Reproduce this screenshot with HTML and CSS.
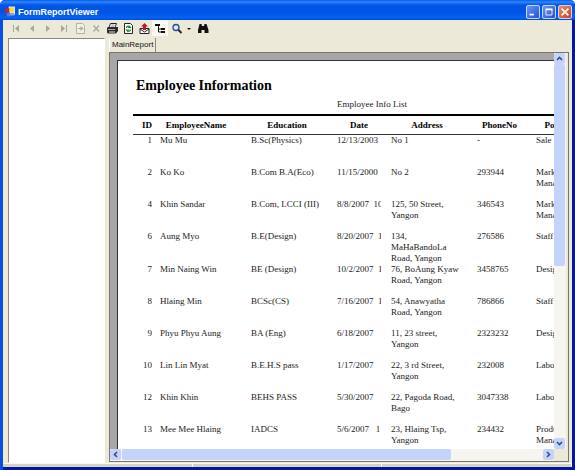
FILE: index.html
```html
<!DOCTYPE html>
<html lang="en">
<head>
<meta charset="utf-8">
<title>FormReportViewer</title>
<link rel="stylesheet" href="styles.css">
</head>
<body>
<div class="window">
  <header class="titlebar">
    <svg class="app-icon" viewBox="0 0 11 11" aria-hidden="true">
      <rect x="4" y="0" width="7" height="9" fill="#dfe6f5"/>
      <rect x="0" y="2" width="5" height="5" fill="#c8202c"/>
      <rect x="5" y="1" width="5" height="5" fill="#f2dc3c"/>
      <rect x="2" y="7" width="4" height="4" fill="#4a7be0"/>
      <rect x="6" y="7" width="4" height="3" fill="#8f9cc4"/>
    </svg>
    <h1 class="caption">FormReportViewer</h1>
    <button class="win-btn" type="button" aria-label="Minimize"><svg viewBox="0 0 14 14"><rect x="3" y="9" width="5" height="2" fill="#fff"/></svg></button>
    <button class="win-btn" type="button" aria-label="Maximize"><svg viewBox="0 0 14 14"><path d="M3.500 4h7v6.500h-7z" fill="none" stroke="#fff"/><path d="M3 3h8v2H3z" fill="#fff"/></svg></button>
    <button class="win-btn close" type="button" aria-label="Close"><svg viewBox="0 0 14 14"><path d="M3 3l8 8M11 3l-8 8" stroke="#fff" stroke-width="2"/></svg></button>
  </header>

  <nav class="toolbar" aria-label="Report tools">
    <button class="tool" type="button" aria-label="First page" disabled><svg viewBox="0 0 16 16"><path d="M5 5h1v7H5zM11 5v7L7 8.500z" fill="#aaa89c"/></svg></button>
    <button class="tool" type="button" aria-label="Previous page" disabled><svg viewBox="0 0 16 16"><path d="M10 5v7L6 8.500z" fill="#aaa89c"/></svg></button>
    <button class="tool" type="button" aria-label="Next page" disabled><svg viewBox="0 0 16 16"><path d="M6 5v7l4-3.500z" fill="#aaa89c"/></svg></button>
    <button class="tool" type="button" aria-label="Last page" disabled><svg viewBox="0 0 16 16"><path d="M5 5v7l4-3.500zM10 5h1v7h-1z" fill="#aaa89c"/></svg></button>
    <button class="tool" type="button" aria-label="Go to page" disabled><svg viewBox="0 0 16 16"><path d="M4.500 3.500h6l2 2v8h-8z" fill="#f3f1e6" stroke="#b5b3a5"/><path d="M6 8h2.500V6l3 2.500-3 2.500V9H6z" fill="#aaa89c"/></svg></button>
    <button class="tool" type="button" aria-label="Close view" disabled><svg viewBox="0 0 16 16"><path d="M5.500 5.500l5.500 6M11 5.500l-5.500 6" stroke="#aaa89c" stroke-width="1.300"/></svg></button>
    <button class="tool" type="button" aria-label="Print"><svg viewBox="0 0 16 16"><path d="M6.500 3.500h6l-1.500 4H5z" fill="#fff" stroke="#222"/><path d="M7.500 5h3M7 6.200h3" stroke="#666" stroke-width=".6"/><path d="M3 8l1-1h10v4l-2 2.500H4L3 12.500z" fill="#2b2b2b"/><path d="M4 9h7v1H4z" fill="#a8a8a0"/><path d="M5 11.500h6v1H5z" fill="#ddd"/></svg></button>
    <button class="tool" type="button" aria-label="Refresh"><svg viewBox="0 0 16 16"><path d="M4.500 3.500h6l2 2v8h-8z" fill="#fff" stroke="#222"/><path d="M6.500 8c0-2 2-2 3.500-1M10.500 9.500c0 2-2 2-3.500 1" fill="none" stroke="#168a28" stroke-width="1.300"/><path d="M9 5l2.500 3H8zM8 12.500L5.500 9.500H9z" fill="#168a28"/></svg></button>
    <button class="tool" type="button" aria-label="Export report"><svg viewBox="0 0 16 16"><path d="M4 8.500h9v5H4z" fill="#fff" stroke="#222"/><path d="M4 9l4.500 3L13 9" fill="none" stroke="#222"/><path d="M8.500 3L12 6.500h-2V10H7V6.500H5z" fill="#c4182c"/></svg></button>
    <button class="tool pressed" type="button" aria-label="Toggle group tree"><svg viewBox="0 0 16 16"><path d="M3 4h5v2H3zM9 8h4v2H9zM9 11h4v2H9z" fill="#111"/><path d="M6.500 6v6H9M6.500 9H9" fill="none" stroke="#111"/></svg></button>
    <button class="tool" type="button" aria-label="Zoom"><svg viewBox="0 0 16 16"><path d="M10 9.500l3.500 3.500" stroke="#222" stroke-width="2"/><circle cx="8" cy="7.500" r="3" fill="#dbe9ff" stroke="#24479c" stroke-width="1.300"/></svg></button>
    <button class="tool narrow" type="button" aria-label="Zoom levels"><svg viewBox="0 0 10 16"><path d="M3 8h4L5 10z" fill="#111"/></svg></button>
    <button class="tool" type="button" aria-label="Search text"><svg viewBox="0 0 16 16"><path d="M5.500 4h2l.5 2h2l.5-2h2l2 6v3h-4v-3h-3v3H4v-3z" fill="#111"/></svg></button>
  </nav>

  <div class="workspace">
    <aside class="tree" aria-label="Group tree"></aside>
    <main class="report">
      <div class="tabs"><button class="tab" type="button">MainReport</button></div>
      <div class="viewer">
        <div class="canvas">
          <article class="page">
            <h2 class="title">Employee Information</h2>
            <p class="subtitle">Employee Info List</p>
            <table class="list">
              <colgroup><col class="c-id"><col class="c-name"><col class="c-edu"><col class="c-date"><col class="c-addr"><col class="c-phone"><col class="c-pos"></colgroup>
              <thead><tr><th class="id">ID</th><th class="name">EmployeeName</th><th>Education</th><th class="date">Date</th><th>Address</th><th>PhoneNo</th><th class="pos">Position</th></tr></thead>
              <tbody>
                <tr><td class="id">1</td><td>Mu Mu</td><td>B.Sc(Physics)</td><td class="date"><div>12/13/2003</div></td><td class="addr">No 1</td><td>-</td><td>Sale</td></tr>
                <tr><td class="id">2</td><td>Ko Ko</td><td>B.Com B.A(Eco)</td><td class="date"><div>11/15/2000</div></td><td class="addr">No 2</td><td>293944</td><td>Marketing Manager</td></tr>
                <tr><td class="id">4</td><td>Khin Sandar</td><td>B.Com, LCCI (III)</td><td class="date"><div>8/8/2007  10</div></td><td class="addr">125, 50 Street, Yangon</td><td>346543</td><td>Marketing Manager</td></tr>
                <tr><td class="id">6</td><td>Aung Myo</td><td>B.E(Design)</td><td class="date"><div>8/20/2007  1</div></td><td class="addr">134, MaHaBandoLa Road, Yangon</td><td>276586</td><td>Staff</td></tr>
                <tr><td class="id">7</td><td>Min Naing Win</td><td>BE (Design)</td><td class="date"><div>10/2/2007  1</div></td><td class="addr">76, BoAung Kyaw Road, Yangon</td><td>3458765</td><td>Designer</td></tr>
                <tr><td class="id">8</td><td>Hlaing Min</td><td>BCSc(CS)</td><td class="date"><div>7/16/2007  1</div></td><td class="addr">54, Anawyatha Road, Yangon</td><td>786866</td><td>Staff</td></tr>
                <tr><td class="id">9</td><td>Phyu Phyu Aung</td><td>BA (Eng)</td><td class="date"><div>6/18/2007</div></td><td class="addr">11, 23 street, Yangon</td><td>2323232</td><td>Designer</td></tr>
                <tr><td class="id">10</td><td>Lin Lin Myat</td><td>B.E.H.S pass</td><td class="date"><div>1/17/2007</div></td><td class="addr">22, 3 rd Street, Yangon</td><td>232008</td><td>Labour</td></tr>
                <tr><td class="id">12</td><td>Khin Khin</td><td>BEHS PASS</td><td class="date"><div>5/30/2007</div></td><td class="addr">22, Pagoda Road, Bago</td><td>3047338</td><td>Labour</td></tr>
                <tr><td class="id">13</td><td>Mee Mee Hlaing</td><td>IADCS</td><td class="date"><div>5/6/2007   1</div></td><td class="addr">23, Hlaing Tsp, Yangon</td><td>234432</td><td>Product Manager</td></tr>
              </tbody>
            </table>
          </article>
        </div>
        <div class="scroll vertical">
          <button class="arrow" type="button" aria-label="Scroll up"><svg viewBox="0 0 11 11"><path d="M3 7l2.500-2.500L8 7" fill="none" stroke="#32507e" stroke-width="1.600"/></svg></button>
          <div class="track"><div class="thumb"></div></div>
          <button class="arrow" type="button" aria-label="Scroll down"><svg viewBox="0 0 11 11"><path d="M3 4l2.500 2.500L8 4" fill="none" stroke="#32507e" stroke-width="1.600"/></svg></button>
        </div>
        <div class="scroll horizontal">
          <button class="arrow" type="button" aria-label="Scroll left"><svg viewBox="0 0 11 11"><path d="M7 3L4.500 5.500 7 8" fill="none" stroke="#32507e" stroke-width="1.600"/></svg></button>
          <div class="track"><div class="thumb"></div></div>
          <button class="arrow" type="button" aria-label="Scroll right"><svg viewBox="0 0 11 11"><path d="M4 3l2.500 2.500L4 8" fill="none" stroke="#32507e" stroke-width="1.600"/></svg></button>
        </div>
        <div class="corner"></div>
      </div>
    </main>
  </div>
  <footer class="status"><span></span><span></span><span></span></footer>
</div>
</body>
</html>
```
FILE: styles.css
```css
* { box-sizing: border-box; }

body {
  margin: 0;
  background: #fff;
  font-family: "Liberation Sans", sans-serif;
}

button {
  display: block;
  margin: 0;
  padding: 0;
  border: 0;
  background: none;
  font: inherit;
  color: inherit;
}

svg { display: block; width: 100%; height: 100%; }

.window {
  display: flex;
  flex-direction: column;
  height: 100vh;
  padding: 0 3px 3px;
  background: linear-gradient(90deg, #0a4fe0 3px, #0018a0 3px);
  border-radius: 5px 5px 0 0;
  overflow: hidden;
}

/* Title bar */
.titlebar {
  display: flex;
  align-items: center;
  gap: 2px;
  flex: none;
  height: 20px;
  margin: 0 -3px;
  padding: 3px 3px 0 5px;
  background: linear-gradient(#0a5be8 0, #2b86ff 10%, #0256e6 25%, #0054e3 60%, #0263fa 90%, #0148c8 100%);
}

.app-icon { width: 10px; height: 11px; }

.caption {
  flex: 1;
  margin: 0 0 0 1px;
  font-size: 9px;
  line-height: 14px;
  color: #fff;
}

.win-btn {
  width: 14px;
  height: 14px;
  border: 1px solid #c8d6f8;
  border-radius: 2px;
  background: linear-gradient(135deg, #6a94f4, #2254d4);
}

.win-btn.close { background: linear-gradient(135deg, #f08a68, #d0401c); }

/* Toolbar */
.toolbar {
  display: flex;
  flex: none;
  height: 18px;
  padding-left: 5px;
  background: #ece9d8;
}

.tool { width: 16px; height: 16px; }
.tool.narrow { width: 10px; }
.tool.pressed { background: #faf9f4; }

/* Body */
.workspace {
  display: flex;
  flex: 1;
  min-height: 0;
  gap: 4px;
  padding: 0 3px 0 5px;
  background: #ece9d8;
}

.tree {
  flex: none;
  width: 97px;
  border: 1px solid #fff;
  border-top-color: #8c8a7c;
  border-left-color: #8c8a7c;
  background: #fff;
}

.report {
  display: flex;
  flex: 1;
  flex-direction: column;
  min-width: 0;
}

.tabs { flex: none; height: 14px; }

.tab {
  height: 14px;
  padding: 0 2px;
  border-right: 1px solid #8c8a7c;
  border-left: 1px solid #fff;
  font-size: 8px;
  line-height: 14px;
  color: #111;
}

.viewer {
  display: grid;
  flex: 1;
  grid-template-columns: minmax(0, 1fr) 12px;
  grid-template-rows: minmax(0, 1fr) 12px;
  min-height: 0;
  margin-bottom: 1px;
  padding-right: 2px;
  border: 1px solid #77756a;
}

.canvas {
  padding: 7px 0 0 7px;
  background: #a8a6a8;
  overflow: hidden;
}

.page {
  height: 100%;
  padding: 16px 0 0 15px;
  border: 1px solid #333;
  border-width: 1px 0 0 1px;
  background: #fff;
  font-family: "Liberation Serif", serif;
  color: #222;
  overflow: hidden;
}

.title {
  margin: 0 3px;
  font-size: 14px;
  line-height: 18px;
  color: #000;
}

.subtitle {
  margin: 4px 0 4px 204px;
  font-size: 9px;
  line-height: 11px;
}

.list {
  width: 457px;
  border-collapse: separate;
  border-spacing: 0;
  table-layout: fixed;
  font-size: 9px;
  line-height: 11px;
}

.c-id { width: 27px; }
.c-name { width: 91px; }
.c-edu { width: 86px; }
.c-date { width: 54px; }
.c-addr { width: 86px; }
.c-phone { width: 59px; }
.c-pos { width: 54px; }

.list th {
  height: 21px;
  padding: 2px 14px 2px 0;
  border-top: 2px solid #000;
  border-bottom: 1px solid #333;
  color: #000;
}

.list th.name { padding-right: 19px; }
.list th.date { padding-right: 10px; }
.list th.pos { padding-right: 6px; }

.list td {
  height: 32px;
  padding: 0;
  vertical-align: top;
}

.list td.addr { padding-right: 15px; }
.list .id { padding-right: 8px; text-align: right; }

.date div {
  width: 44px;
  overflow: hidden;
  white-space: pre;
}

/* Scroll bars */
.scroll { display: flex; background: #f6f5f0; }
.vertical { flex-direction: column; }
.horizontal { grid-row: 2; }
.corner { background: #ece9d8; }

.arrow {
  flex: none;
  width: 11px;
  height: 11px;
  border-radius: 2px;
  background: #c3d3fb;
}

.track { flex: 1; }

.thumb {
  border-radius: 2px;
  background: #c3d3fb;
}

.vertical .thumb { width: 11px; height: 54%; }
.horizontal .thumb { width: 78%; height: 11px; margin-left: 1px; }

/* Status strip */
.status {
  display: grid;
  flex: none;
  grid-template-columns: 1fr 1fr 1fr;
  height: 4px;
  border-top: 1px solid #f8f7f0;
  background: #d6d2bc;
}

.status span { border-right: 1px solid #fff; }
```
